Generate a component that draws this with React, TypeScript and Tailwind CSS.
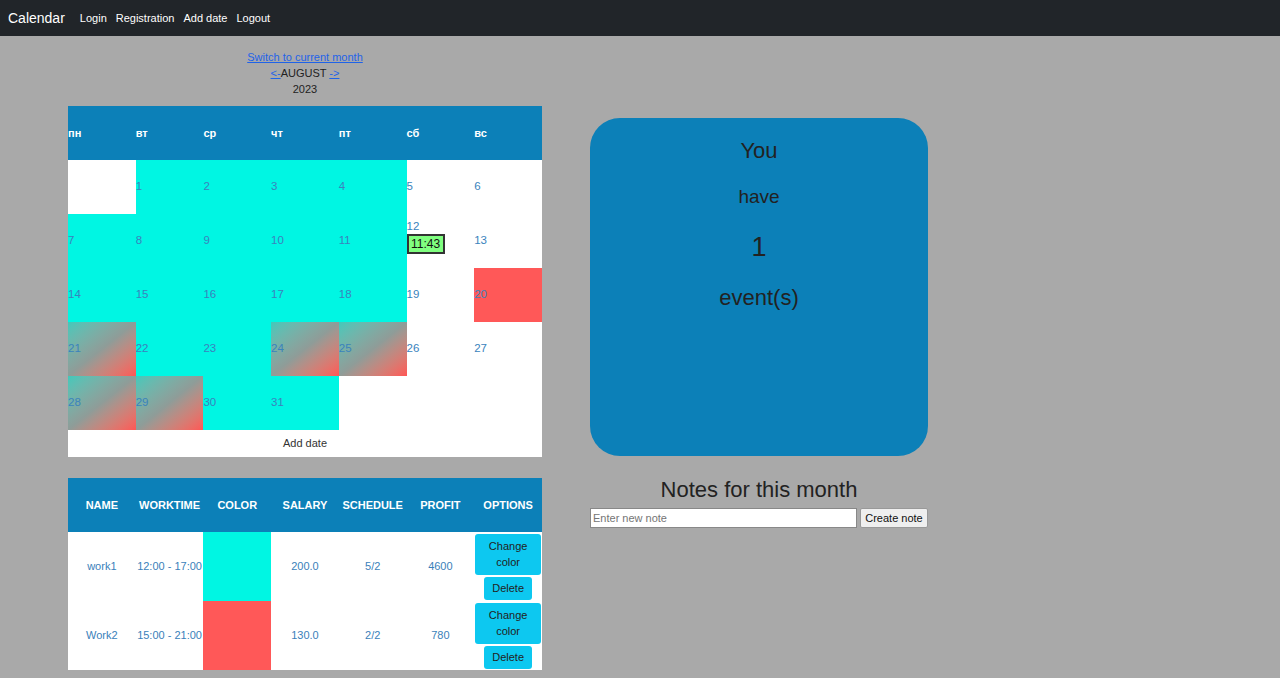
import { clsx } from 'clsx';

type Fill = 'none' | 'cyan' | 'red' | 'mix';

const DAYS = ['пн', 'вт', 'ср', 'чт', 'пт', 'сб', 'вс'];

const GRADIENT = new Set([21, 24, 25, 28, 29]);
const WHITE = new Set([5, 6, 12, 13, 19, 26, 27]);

function fillOf(day: number | null): Fill {
  if (day === null) return 'none';
  if (day === 20) return 'red';
  if (GRADIENT.has(day)) return 'mix';
  if (WHITE.has(day)) return 'none';
  return 'cyan';
}

const WEEKS: (number | null)[][] = [
  [null, 1, 2, 3, 4, 5, 6],
  [7, 8, 9, 10, 11, 12, 13],
  [14, 15, 16, 17, 18, 19, 20],
  [21, 22, 23, 24, 25, 26, 27],
  [28, 29, 30, 31, null, null, null],
];

const WORKS = [
  { name: 'work1', time: '12:00 - 17:00', color: 'bg-[#00f6e3]', salary: '200.0', schedule: '5/2', profit: '4600' },
  { name: 'Work2', time: '15:00 - 21:00', color: 'bg-[#ff5858]', salary: '130.0', schedule: '2/2', profit: '780' },
];

function DayCell({ day }: { day: number | null }) {
  const fill = fillOf(day);
  return (
    <td
      className={clsx(
        'h-[54px] p-0 align-middle text-left text-[11.5px] text-[#3a83bd]',
        fill === 'cyan' && 'bg-[#00f6e3]',
        fill === 'red' && 'bg-[#ff5858]',
        fill === 'mix' && 'bg-gradient-to-br from-[#3fc9bb] via-[#8f9c98] to-[#ff5555]',
      )}
    >
      {day === 12 ? (
        <div className="flex flex-col items-start pb-[9px]">
          <span className="leading-[13px]">12</span>
          <span className="mt-[1px] w-[38px] h-[20px] border-2 border-[#333] bg-[#80ff80] text-[#111] text-[12px] leading-[16px] text-center">
            11:43
          </span>
        </div>
      ) : (
        day
      )}
    </td>
  );
}

export default function App() {
  return (
    <div className="min-h-screen bg-[#a9a9a9] font-['Liberation_Sans',Arial,sans-serif]">
      <nav className="h-[36px] bg-[#212529] flex items-center px-[8px] gap-[9px]">
        <span className="text-white text-[14px] mr-[6px]">Calendar</span>
        <a className="text-white text-[11px]">Login</a>
        <a className="text-white text-[11px]">Registration</a>
        <a className="text-white text-[11px]">Add date</a>
        <a className="text-white text-[11px]">Logout</a>
      </nav>

      <main className="flex pt-[13px] pl-[68px]">
        {/* Left column */}
        <div className="w-[474px]">
          <div className="text-center text-[11px] leading-[16px] text-[#222]">
            <div><a className="text-[#1f63e8] underline">Switch to current month</a></div>
            <div>
              <a className="text-[#1f63e8] underline">&lt;-</a>AUGUST{' '}
              <a className="text-[#1f63e8] underline">-&gt;</a>
            </div>
            <div>2023</div>
          </div>

          <table className="mt-[9px] w-[474px] table-fixed border-collapse bg-white">
            <thead>
              <tr className="bg-[#0c80b8]">
                {DAYS.map(d => (
                  <th key={d} className="h-[54px] p-0 text-left text-white font-bold text-[11px]">{d}</th>
                ))}
              </tr>
            </thead>
            <tbody>
              {WEEKS.map((week, i) => (
                <tr key={i}>
                  {week.map((day, j) => <DayCell key={j} day={day} />)}
                </tr>
              ))}
              <tr>
                <td colSpan={7} className="h-[27px] p-0 text-center text-[11px] text-[#333]">Add date</td>
              </tr>
            </tbody>
          </table>

          <table className="mt-[21px] w-[474px] table-fixed border-collapse bg-white">
            <thead>
              <tr className="bg-[#0c80b8]">
                {['NAME', 'WORKTIME', 'COLOR', 'SALARY', 'SCHEDULE', 'PROFIT', 'OPTIONS'].map(h => (
                  <th key={h} className="h-[54px] p-0 text-center text-white font-bold text-[11px]">{h}</th>
                ))}
              </tr>
            </thead>
            <tbody>
              {WORKS.map(w => (
                <tr key={w.name} className="text-center text-[11px] text-[#3a7fba]">
                  <td className="h-[69px] p-0">{w.name}</td>
                  <td className="p-0 whitespace-nowrap">{w.time}</td>
                  <td className={clsx('p-0', w.color)}></td>
                  <td className="p-0">{w.salary}</td>
                  <td className="p-0">{w.schedule}</td>
                  <td className="p-0">{w.profit}</td>
                  <td className="p-0">
                    <div className="flex flex-col items-center gap-[2px]">
                      <button className="w-[66px] h-[41px] rounded-[3px] bg-[#0dc8f0] text-[#222] text-[11px] leading-[16px]">
                        Change<br />color
                      </button>
                      <button className="w-[48px] h-[23px] rounded-[3px] bg-[#0dc8f0] text-[#222] text-[11px]">
                        Delete
                      </button>
                    </div>
                  </td>
                </tr>
              ))}
            </tbody>
          </table>
        </div>

        {/* Right column */}
        <div className="ml-[48px] w-[338px] mt-[69px]">
          <div className="h-[338px] rounded-[30px] bg-[#0c80b8] flex flex-col items-center text-[#222] pt-[20px]">
            <div className="text-[22px] leading-[26px]">You</div>
            <div className="mt-[22px] text-[19px] leading-[21px]">have</div>
            <div className="mt-[23px] text-[27px] leading-[34px]">1</div>
            <div className="mt-[21px] text-[22px] leading-[26px]">event(s)</div>
          </div>
          <div className="mt-[21px] text-center text-[22px] leading-[26px] text-[#222]">Notes for this month</div>
          <div className="mt-[5px] flex gap-[3px]">
            <input
              placeholder="Enter new note"
              className="w-[267px] h-[20px] bg-white border border-[#888] px-[2px] text-[11px] placeholder:text-[#757575] outline-none"
            />
            <button className="w-[68px] h-[20px] bg-[#efefef] border border-[#999] rounded-[2px] text-[11px] text-[#111]">
              Create note
            </button>
          </div>
        </div>
      </main>
    </div>
  );
}
